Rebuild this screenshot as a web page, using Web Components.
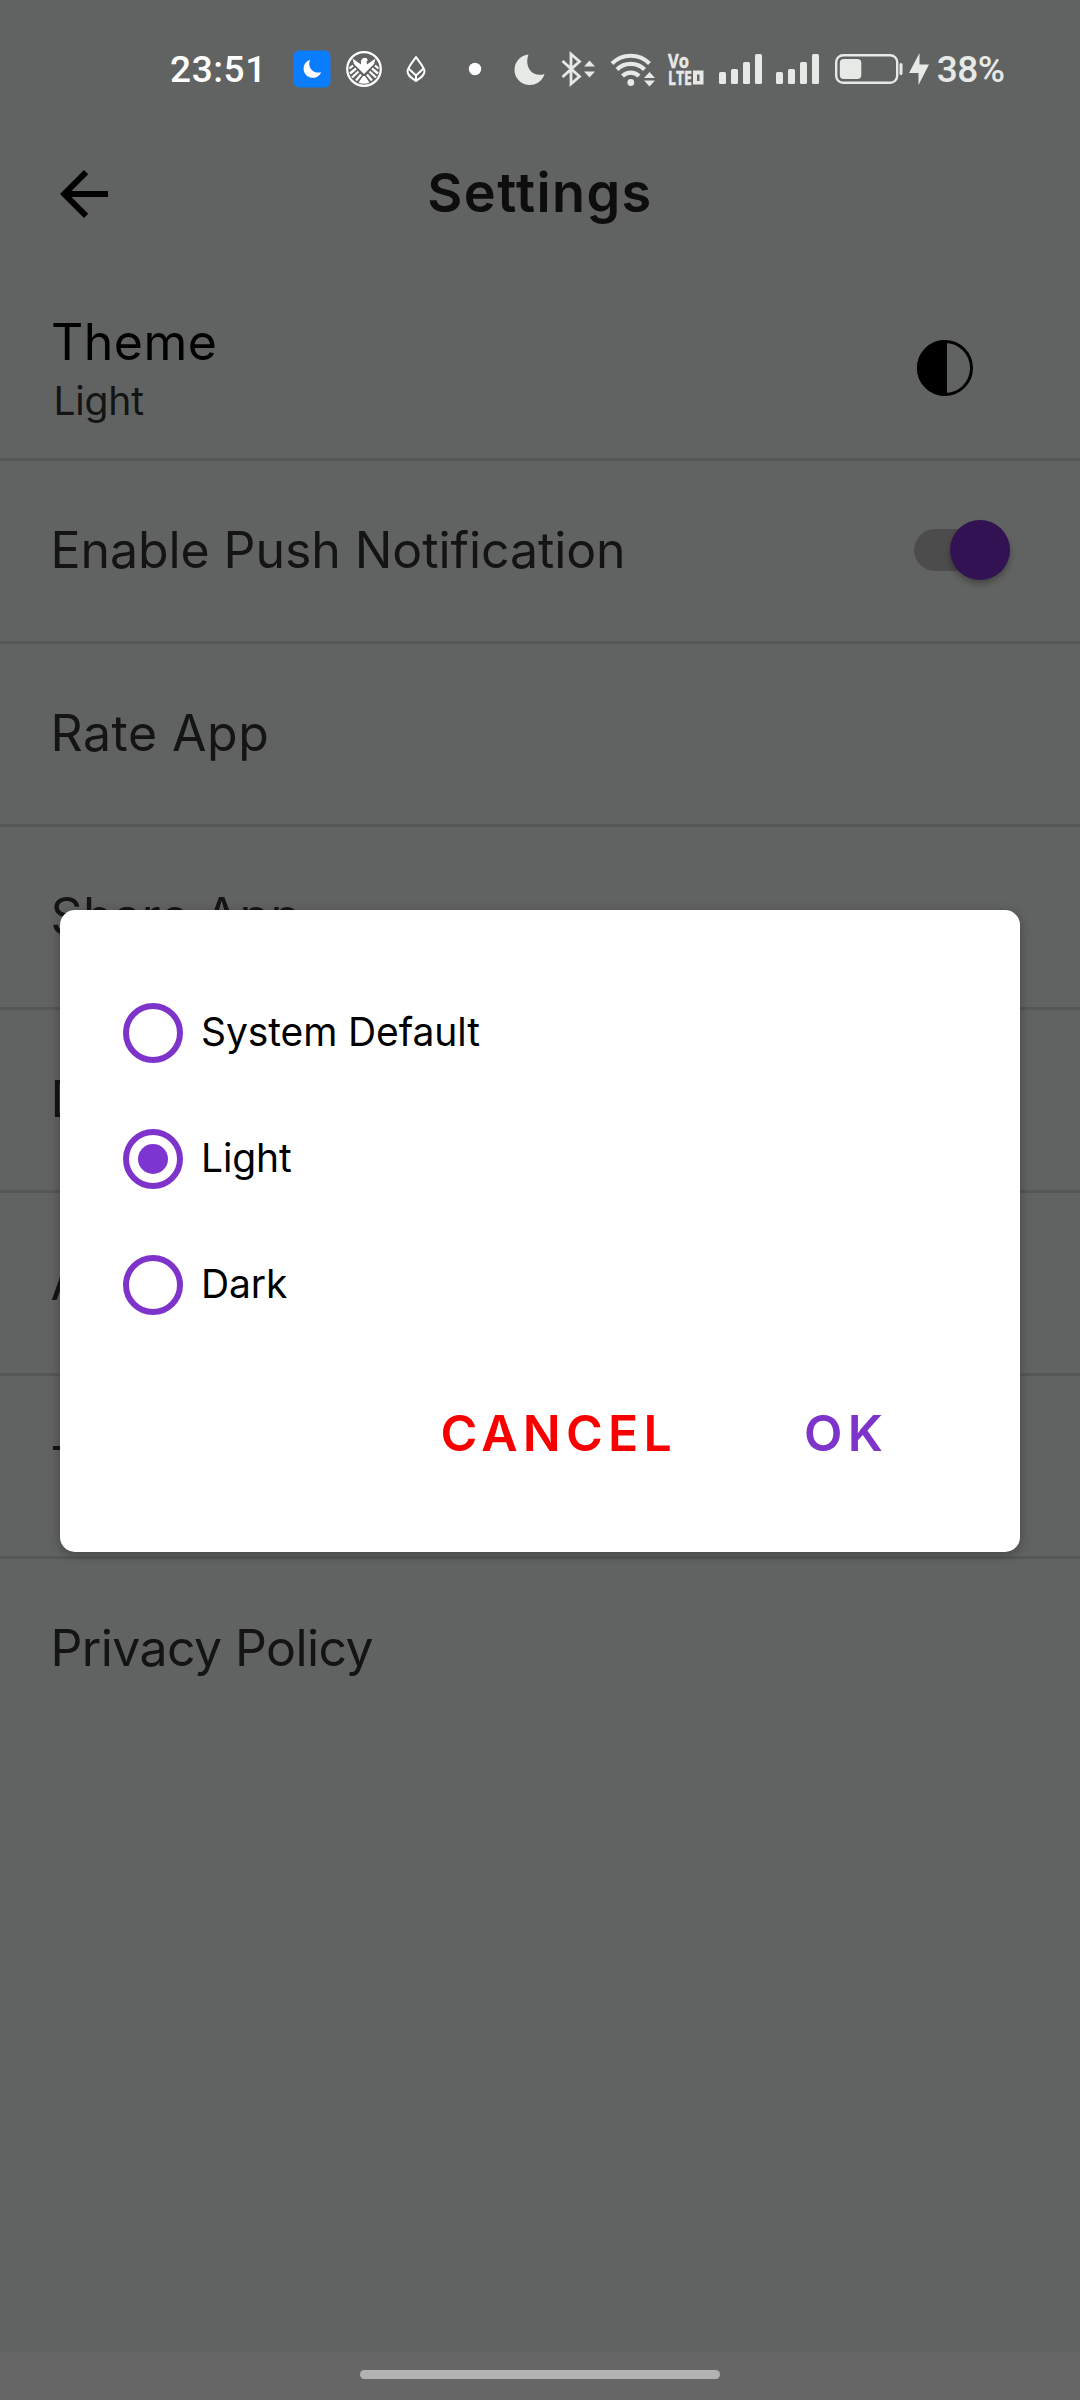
<!DOCTYPE html>
<html lang="en">
<head>
<meta charset="utf-8">
<meta name="viewport" content="width=device-width, initial-scale=1">
<title>Settings</title>
<style>
  html, body {
    margin: 0;
    height: 100%;
    overflow: hidden;
  }
  body {
    font-family: Inter, Lato, sans-serif;
  }
</style>
</head>
<body>

<settings-screen>
  <status-bar slot="status" time="23:51" battery="38%"></status-bar>
  <app-header slot="header">Settings</app-header>

  <settings-row two-line>
    Theme
    <span slot="value">Light</span>
    <contrast-icon slot="action"></contrast-icon>
  </settings-row>
  <settings-row>
    Enable Push Notification
    <toggle-switch slot="action"></toggle-switch>
  </settings-row>
  <settings-row style="--tracking: 0.5px">Rate App</settings-row>
  <settings-row style="--tracking: 0.5px">Share App</settings-row>
  <settings-row>Disclaimer</settings-row>
  <settings-row>About Us</settings-row>
  <settings-row>Terms &amp; Conditions</settings-row>
  <settings-row last style="--tracking: -0.6px">Privacy Policy</settings-row>

  <theme-dialog slot="dialog">
    <radio-option>System Default</radio-option>
    <radio-option checked>Light</radio-option>
    <radio-option>Dark</radio-option>
    <dialog-button slot="actions" style="--color: #f80000">CANCEL</dialog-button>
    <dialog-button slot="actions" style="--color: #7e34ca">OK</dialog-button>
  </theme-dialog>
</settings-screen>

<script>
// Attaches an open shadow root filled with the given markup
function mount(el, html) {
  el.attachShadow({ mode: 'open' }).innerHTML = html;
}

class SettingsScreen extends HTMLElement {
  constructor() {
    super();
    mount(this, `
      <style>
        :host {
          position: relative;
          display: flex;
          flex-direction: column;
          height: 2400px;
          background: #f3f8f4;
        }
        .list {
          flex: 1;
          display: flex;
          flex-direction: column;
        }
        .nav-bar {
          height: 48px;
          background: #fff;
        }
        /* Scrim covers everything but the status bar icons */
        .scrim {
          position: absolute;
          inset: 0;
          display: flex;
          flex-direction: column;
          background: rgba(0, 0, 0, 0.6);
        }
        .center {
          flex: 1;
          display: flex;
          align-items: center;
          padding: 92px 60px 0;
        }
        .gesture {
          display: flex;
          justify-content: center;
          height: 30px;
        }
        .gesture i {
          width: 360px;
          height: 9px;
          border-radius: 5px;
          background: #b2b2b2;
        }
      </style>
      <slot name="status"></slot>
      <slot name="header"></slot>
      <div class="list"><slot></slot></div>
      <div class="nav-bar"></div>
      <div class="scrim">
        <div class="center"><slot name="dialog"></slot></div>
        <div class="gesture"><i></i></div>
      </div>
    `);
  }
}

class StatusBar extends HTMLElement {
  constructor() {
    super();
    mount(this, `
      <style>
        :host {
          position: relative;
          z-index: 2;
          display: flex;
          align-items: center;
          justify-content: space-between;
          height: 138px;
          box-sizing: border-box;
          padding: 0 75.5px 0 170px;
          color: #e7e9e7;
          font-family: Roboto, "Open Sans", sans-serif;
          font-size: 37px;
          font-weight: 500;
          line-height: 60px;
        }
        .left, .right {
          display: flex;
          align-items: center;
        }
        .left { color: #fff; }
        .time { width: 93px; letter-spacing: 0.6px; padding-top: 2px; }
        .battery { letter-spacing: -0.5px; margin-left: 8px; padding-top: 2px; }
        svg { display: block; fill: currentColor; flex: none; overflow: visible; }
        text {
          font-family: "Open Sans", sans-serif;
          font-weight: 700;
          font-size: 19.5px;
          stroke: currentColor;
          stroke-width: 0.5px;
        }
      </style>
      <div class="left">
        <span class="time"></span>
        <!-- focus mode badge -->
        <svg width="38" height="38" viewBox="0 0 38 38" style="margin-left: 29.5px">
          <rect x=".5" y=".5" width="37" height="37" rx="6" fill="#0a7dff"/>
          <path d="M17.3 9.8a9.2 9.2 0 1 0 10.9 12.5c-3.4.7-7.3.2-9.9-2.8-2.6-3-2.7-6.7-1-9.7z"/>
        </svg>
        <!-- eagle emblem -->
        <svg width="38" height="38" viewBox="0 0 38 38" style="margin-left: 14px">
          <circle cx="19" cy="19" r="16.8" fill="none" stroke="currentColor" stroke-width="2.2"/>
          <path d="M7.5 8.500L16 14.500V10.500l2-2.500h3.500l1.500 2.500-1.500.5.500 3.500 8.500-6-1.500 5.500L19 24 9 14z"/>
          <path d="M8 15.500L4.500 18.500M11 18.500L5 23.500M13.500 21.500L7 27.500M16 24.500L11 30.500M30 15.500L33.500 18.500M27 18.500L33 23.500M24.500 21.500L31 27.500M22 24.500L27 30.500" stroke="currentColor" stroke-width="2.3"/>
          <path d="M18 26h2l4.500 6.500q-5.500 2.500-11 0z"/>
        </svg>
        <!-- leaf diamond -->
        <svg width="22" height="28" viewBox="0 0 22 28" style="margin-left: 22.5px">
          <g fill="none" stroke="currentColor" stroke-width="2" stroke-linejoin="round">
            <path d="M11 2C8.5 6 2.500 12.500 2.500 16.500c0 4 4 6.500 8.500 9.500 4.500-3 8.500-5.500 8.500-9.500C19.500 12.500 13.500 6 11 2z"/>
            <path d="M3.500 13.500L11 20.500l7.500-7M11 20.500V26"/>
          </g>
        </svg>
        <svg width="14" height="14" viewBox="0 0 14 14" style="margin-left: 40.5px">
          <circle cx="7" cy="7" r="6.2"/>
        </svg>
      </div>
      <div class="right">
        <!-- do not disturb moon -->
        <svg width="30" height="31" viewBox="0 0 30 31">
          <path d="M13.5.5A15.3 15.3 0 1 0 29.500 20c-5.500 1.800-10.800.8-14-3.200-3.500-4.400-4.200-10.300-2-16.300z"/>
        </svg>
        <!-- bluetooth -->
        <svg width="35" height="34" viewBox="0 0 35 34" style="margin-left: 16.5px">
          <path d="M1.500 9l17 15.500-8.500 7.500V2l8.500 7.500L1.500 25" fill="none" stroke="currentColor" stroke-width="2.8"/>
          <path d="M28.500 8.500l5.500 6H23zM28.500 25.500l5.500-6H23z"/>
        </svg>
        <!-- wifi -->
        <svg width="46" height="35" viewBox="0 0 46 35" style="margin-left: 13.5px">
          <g fill="none" stroke="currentColor" stroke-width="4.2">
            <path d="M2 11.500a26.500 26.500 0 0 1 37.500 0"/>
            <path d="M7 17.500a19.500 19.500 0 0 1 27.500 0"/>
            <path d="M12.500 24a12 12 0 0 1 16.500 0"/>
          </g>
          <circle cx="20.800" cy="30.500" r="3.400"/>
          <path d="M39.500 20l5.500 6H34zM39.500 34.500l5.500-6H34z"/>
        </svg>
        <!-- VoLTE -->
        <svg width="36" height="33" viewBox="0 0 36 33" style="margin-left: 12px">
          <text x="0" y="15" textLength="21" lengthAdjust="spacingAndGlyphs">Vo</text>
          <text x="0" y="31.500" textLength="24" lengthAdjust="spacingAndGlyphs">LTE</text>
          <path d="M25 17.500H35.500v14H25zM29 21.500v6.500H31.500v-6.500z" fill-rule="evenodd"/>
        </svg>
        <!-- two SIM signals -->
        <svg width="44" height="30" viewBox="0 0 44 30" style="margin-left: 15px">
          <rect y="18" width="7" height="12" rx="1.5"/><rect x="12" y="15" width="7" height="15" rx="1.5"/>
          <rect x="24" y="8" width="7" height="22" rx="1.5"/><rect x="36" width="7" height="30" rx="1.5"/>
        </svg>
        <svg width="44" height="30" viewBox="0 0 44 30" style="margin-left: 13px">
          <rect y="18" width="7" height="12" rx="1.5"/><rect x="12" y="15" width="7" height="15" rx="1.5"/>
          <rect x="24" y="8" width="7" height="22" rx="1.5"/><rect x="36" width="7" height="30" rx="1.5"/>
        </svg>
        <!-- battery and charging bolt -->
        <svg width="68" height="30" viewBox="0 0 68 30" style="margin-left: 15px">
          <rect x="1.200" y="1.200" width="61" height="27.600" rx="7" fill="none" stroke="currentColor" stroke-width="2.400"/>
          <rect x="4.800" y="5" width="21.500" height="20" rx="4"/>
          <rect x="64.500" y="9" width="3" height="12" rx="1.500"/>
        </svg>
        <svg width="20" height="32" viewBox="0 0 20 32" style="margin-left: 6px">
          <path d="M10.500 0v11.500H20L9.500 32V20H0z"/>
        </svg>
        <span class="battery"></span>
      </div>
    `);
  }

  connectedCallback() {
    this.shadowRoot.querySelector('.time').textContent = this.getAttribute('time');
    this.shadowRoot.querySelector('.battery').textContent = this.getAttribute('battery');
  }
}

class AppHeader extends HTMLElement {
  constructor() {
    super();
    mount(this, `
      <style>
        :host {
          display: grid;
          grid-template-columns: 72px 1fr 72px;
          align-items: center;
          height: 112px;
          padding: 0 48px;
        }
        svg { display: block; }
        h1 {
          margin: 0;
          text-align: center;
          font-size: 54px;
          font-weight: 600;
          line-height: 72px;
          letter-spacing: 1.4px;
          color: #222;
          padding-bottom: 3px;
        }
      </style>
      <svg width="72" height="72" viewBox="0 0 24 24"><path d="M20 11H7.83l5.59-5.59L12 4l-8 8 8 8 1.41-1.41L7.83 13H20v-2z"/></svg>
      <h1><slot></slot></h1>
    `);
  }
}

class SettingsRow extends HTMLElement {
  constructor() {
    super();
    mount(this, `
      <style>
        :host {
          display: flex;
          align-items: center;
          justify-content: space-between;
          box-sizing: border-box;
          height: 183px;
          padding: 0 70px 0 50.5px;
          border-bottom: 3px solid #d8ddd9;
        }
        :host([last]) { border-bottom: none; height: 180px; }
        :host([two-line]) {
          height: 211px;
          padding-top: 28px;
          padding-right: 107px;
        }
        .title {
          font-size: 50px;
          line-height: 60px;
          letter-spacing: var(--tracking, -0.08px);
          color: #333;
          white-space: nowrap;
          padding-bottom: 2px;
        }
        .value {
          font-size: 39px;
          line-height: 57px;
          letter-spacing: -0.2px;
          color: #333;
          padding-left: 3px;
        }
        :host(:not([two-line])) .value { display: none; }
        :host([two-line]) .title {
          color: #000;
          letter-spacing: 0.5px;
          padding: 4px 0 0 0.5px;
        }
      </style>
      <div>
        <div class="title"><slot></slot></div>
        <div class="value"><slot name="value"></slot></div>
      </div>
      <slot name="action"></slot>
    `);
  }
}

class ContrastIcon extends HTMLElement {
  constructor() {
    super();
    mount(this, `
      <style>
        :host { display: block; }
        svg { display: block; }
      </style>
      <svg width="56" height="56" viewBox="0 0 56 56">
        <circle cx="28" cy="28" r="26.5" fill="none" stroke="#000" stroke-width="3"/>
        <path d="M28 0a28 28 0 0 0 0 56h2V0z"/>
      </svg>
    `);
  }
}

class ToggleSwitch extends HTMLElement {
  constructor() {
    super();
    mount(this, `
      <style>
        :host {
          display: flex;
          align-items: center;
          justify-content: flex-end;
          width: 96px;
          height: 42px;
          border-radius: 21px;
          background: #bebebe;
          margin-bottom: 2px;
        }
        .thumb {
          flex: none;
          width: 60px;
          height: 60px;
          border-radius: 50%;
          background: #7e2fce;
          box-shadow: 0 4px 6px rgba(0, 0, 0, 0.3);
        }
      </style>
      <div class="thumb"></div>
    `);
  }
}

class ThemeDialog extends HTMLElement {
  constructor() {
    super();
    mount(this, `
      <style>
        :host {
          display: flex;
          flex-direction: column;
          box-sizing: border-box;
          width: 960px;
          height: 642px;
          padding: 60px 63px 0;
          border-radius: 15px;
          background: #fff;
          box-shadow: 0 3px 12px rgba(0, 0, 0, 0.3);
        }
        .actions {
          display: flex;
          justify-content: flex-end;
          gap: 127px;
          padding: 55px 69px 0 0;
        }
      </style>
      <slot></slot>
      <div class="actions"><slot name="actions"></slot></div>
    `);
  }
}

class RadioOption extends HTMLElement {
  constructor() {
    super();
    mount(this, `
      <style>
        :host {
          display: flex;
          align-items: center;
          gap: 18px;
          height: 126px;
          font-size: 39px;
          line-height: 50px;
          letter-spacing: -0.1px;
          color: #000;
        }
        .ring {
          display: flex;
          align-items: center;
          justify-content: center;
          box-sizing: border-box;
          width: 60px;
          height: 60px;
          border: 6px solid #7e34ca;
          border-radius: 50%;
        }
        :host([checked]) .ring::after {
          content: "";
          width: 30px;
          height: 30px;
          border-radius: 50%;
          background: #7e34d0;
        }
        .label { padding-bottom: 2px; }
      </style>
      <span class="ring"></span>
      <span class="label"><slot></slot></span>
    `);
  }
}

class DialogButton extends HTMLElement {
  constructor() {
    super();
    mount(this, `
      <style>
        :host {
          display: block;
          font-size: 50px;
          font-weight: 600;
          line-height: 60px;
          letter-spacing: 5.2px;
          color: var(--color);
        }
      </style>
      <slot></slot>
    `);
  }
}

customElements.define('settings-screen', SettingsScreen);
customElements.define('status-bar', StatusBar);
customElements.define('app-header', AppHeader);
customElements.define('settings-row', SettingsRow);
customElements.define('contrast-icon', ContrastIcon);
customElements.define('toggle-switch', ToggleSwitch);
customElements.define('theme-dialog', ThemeDialog);
customElements.define('radio-option', RadioOption);
customElements.define('dialog-button', DialogButton);
</script>
</body>
</html>
